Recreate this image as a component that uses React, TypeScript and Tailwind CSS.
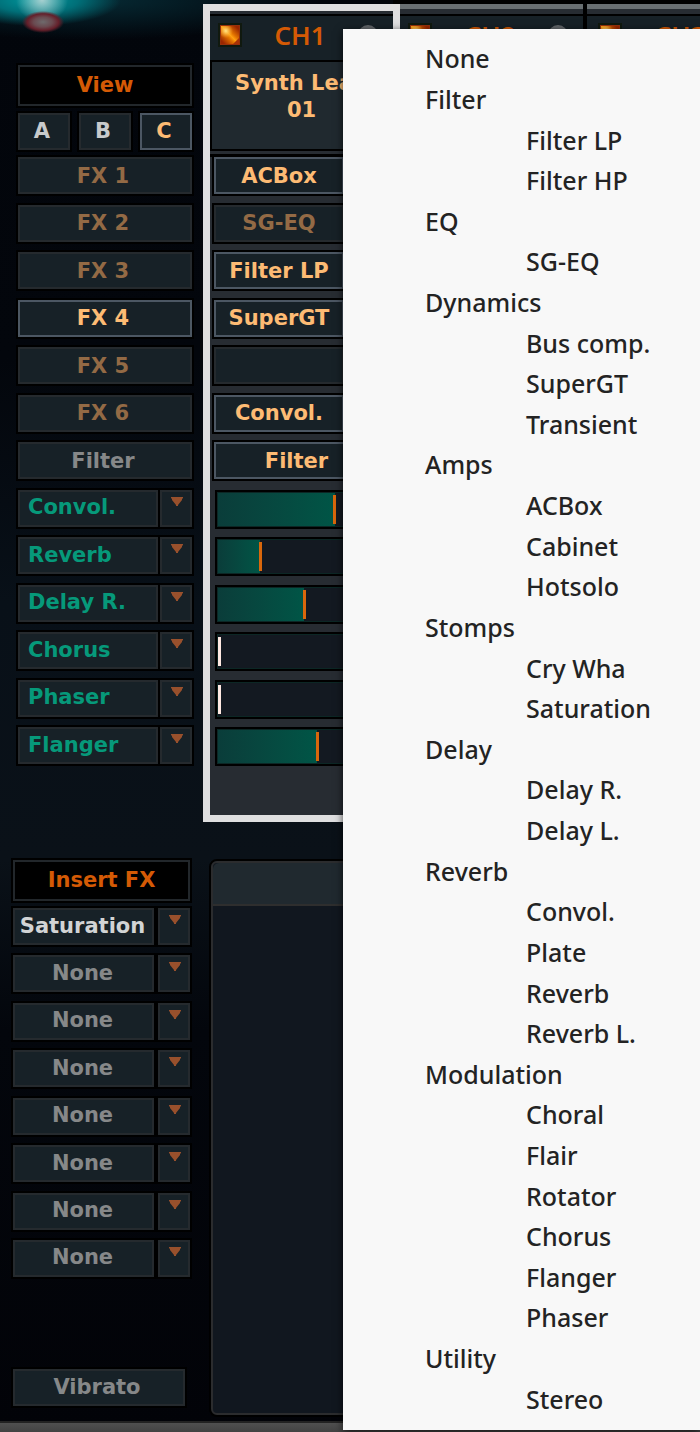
import { useState } from "react";

const box =
  "h-[37px] min-w-0 border-2 bg-[#172127] shadow-[0_0_0_2px_#000] whitespace-nowrap text-[21px] leading-6 font-bold";

const insertOptions = ["None", "Saturation"];

const sends = [
  { name: "Convol.", level: 118 },
  { name: "Reverb", level: 42 },
  { name: "Delay R.", level: 87 },
  { name: "Chorus", level: 0 },
  { name: "Phaser", level: 0 },
  { name: "Flanger", level: 100 },
];

const channelFx = [
  { name: "ACBox", on: true },
  { name: "SG-EQ", on: false },
  { name: "Filter LP", on: true },
  { name: "SuperGT", on: true },
  { name: "", on: false },
  { name: "Convol.", on: true },
];

const menu = [
  { group: "None", items: [] },
  { group: "Filter", items: ["Filter LP", "Filter HP"] },
  { group: "EQ", items: ["SG-EQ"] },
  { group: "Dynamics", items: ["Bus comp.", "SuperGT", "Transient"] },
  { group: "Amps", items: ["ACBox", "Cabinet", "Hotsolo"] },
  { group: "Stomps", items: ["Cry Wha", "Saturation"] },
  { group: "Delay", items: ["Delay R.", "Delay L."] },
  { group: "Reverb", items: ["Convol.", "Plate", "Reverb", "Reverb L."] },
  {
    group: "Modulation",
    items: ["Choral", "Flair", "Rotator", "Chorus", "Flanger", "Phaser"],
  },
  { group: "Utility", items: ["Stereo"] },
];

const ArrowButton = ({ label }: { label: string }) => (
  <button
    aria-label={label}
    className="flex h-[37px] w-8 shrink-0 justify-center border-2 border-[#252a2e] bg-[#172127] pt-[5px] pl-[2px] shadow-[0_0_0_2px_#000]"
  >
    <svg width="12" height="9" viewBox="0 0 12 9">
      <path d="M0 0H12V1L11 2V3L7 8V9H5V8L1 3V2L0 1Z" fill="#98502c" />
    </svg>
  </button>
);

const Led = () => (
  <svg width="24" height="24" viewBox="0 0 24 24" className="shrink-0">
    <defs>
      <linearGradient id="led" x1="0" y1="1" x2="1" y2="0">
        <stop offset="0.1" stopColor="#9a2600" />
        <stop offset="0.38" stopColor="#e07000" />
        <stop offset="0.5" stopColor="#ffa010" />
        <stop offset="0.62" stopColor="#e07000" />
        <stop offset="0.9" stopColor="#9a2600" />
      </linearGradient>
      <radialGradient id="glint" cx="0.27" cy="0.27" r="0.4">
        <stop offset="0" stopColor="#ffe488" />
        <stop offset="1" stopColor="#ffb030" stopOpacity="0" />
      </radialGradient>
    </defs>
    <rect width="24" height="24" fill="#10190f" />
    <rect x="2" y="2" width="20" height="20" fill="#98300a" />
    <rect x="3" y="3" width="18" height="18" fill="url(#led)" />
    <rect x="3" y="3" width="18" height="18" fill="url(#glint)" />
    <path d="M15 21L21 15V21Z" fill="#a83206" />
  </svg>
);

const ChannelHeader = ({ name }: { name: string }) => (
  <div className="mt-[5px] flex h-[46px] justify-end border-t-2 border-black bg-[#172127] pr-[15px]">
    <div className="flex w-40 items-center justify-between pb-[6px]">
      <Led />
      <span className="font-['Noto_Sans',sans-serif] text-[26px] leading-8 font-semibold text-[#d45a05]">
        {name}
      </span>
      <span className="size-5 rounded-full bg-[#62666a]" />
    </div>
  </div>
);

const SendSlider = ({ name, level }: { name: string; level: number }) => {
  const [value, setValue] = useState(level);

  return (
    <div className="flex h-[37px] items-end pl-[3px]">
      <div className="relative h-[35px] w-full border border-[#0c2725] bg-[#131921] shadow-[0_0_0_2px_#000]">
        <div
          className="h-full bg-gradient-to-r from-[#0a3d3a] to-[#005546]"
          style={{ width: `${(value / 165) * 100}%` }}
        />
        <input
          type="range"
          aria-label={name}
          min={0}
          max={165}
          value={value}
          onChange={(e) => setValue(Number(e.target.value))}
          className={`absolute inset-0 h-full w-full appearance-none bg-transparent [&::-webkit-slider-thumb]:h-[29px] [&::-webkit-slider-thumb]:w-[3px] [&::-webkit-slider-thumb]:appearance-none ${
            value === 0
              ? "[&::-webkit-slider-thumb]:bg-[#ffe9e2]"
              : "[&::-webkit-slider-thumb]:bg-[#d9670c]"
          }`}
        />
      </div>
    </div>
  );
};

const App = () => {
  const [view, setView] = useState("C");
  const [slot, setSlot] = useState("FX 4");

  return (
    <div className="relative min-w-[700px] overflow-hidden bg-[#03060c] bg-[radial-gradient(ellipse_21px_11px_at_43px_22px,#6e6a6c_0%,#6a4a50_45%,#641f2a_75%,transparent_100%),radial-gradient(ellipse_26px_22px_at_42px_0px,#a8d0d0_0%,transparent_100%),radial-gradient(ellipse_85px_26px_at_36px_0px,#009aa0_0%,#006f78_50%,transparent_100%),radial-gradient(ellipse_230px_40px_at_90px_0px,#062a34_0%,transparent_100%),linear-gradient(180deg,#02050b_0%,#03060c_25%,#081018_42%,#0a1118_60%,#03060c_72%,#020308_100%)] font-['DejaVu_Sans',sans-serif]">
      <section className="flex">
        <div className="flex w-[203px] shrink-0 flex-col gap-[7px] pt-[65px] pr-[11px] pl-[18px]">
          <h2 className="border-2 border-[#22272b] bg-black py-[6px] text-center text-[21px] leading-[25px] font-bold text-[#d45a05] shadow-[0_0_0_2px_#000]">
            View
          </h2>
          <div className="grid grid-cols-3 gap-[9px]">
            {["A", "B", "C"].map((v) => (
              <button
                key={v}
                onClick={() => setView(v)}
                className={`${box} pr-1 pb-[2px] ${
                  v === view
                    ? "border-[#4c5763] text-[#fdbb74]"
                    : "border-[#252a2e] text-[#c8cacb]"
                }`}
              >
                {v}
              </button>
            ))}
          </div>
          <div className="flex h-[607px] flex-col justify-between">
            {["FX 1", "FX 2", "FX 3", "FX 4", "FX 5", "FX 6"].map((fx) => (
              <button
                key={fx}
                onClick={() => setSlot(fx)}
                className={`${box} pr-1 ${
                  fx === slot
                    ? "border-[#4c5763] text-[#fdbb74]"
                    : "border-[#252a2e] text-[#936a45]"
                }`}
              >
                {fx}
              </button>
            ))}
            <button className={`${box} pr-1 border-[#252a2e] text-[#868889]`}>
              Filter
            </button>
            {sends.map((send) => (
              <div key={send.name} className="flex gap-[2px]">
                <select
                  aria-label={`Send ${send.name}`}
                  defaultValue={send.name}
                  className={`${box} flex-1 appearance-none border-[#252a2e] pb-[2px] pl-2 text-[#06997a]`}
                >
                  {sends.map((s) => (
                    <option key={s.name}>{s.name}</option>
                  ))}
                </select>
                <ArrowButton label={`Choose ${send.name} send`} />
              </div>
            ))}
          </div>
        </div>

        <div className="flex min-w-0 flex-1 overflow-hidden pt-[4px]">
          {/* selected channel */}
          <div className="relative z-10 -mr-[3px] h-[818px] w-[197px] shrink-0 border-[7px] border-[#dfdfe0] bg-[#272c32]">
            <div className="-mt-[2px]">
              <ChannelHeader name="CH1" />
            </div>
            <div className="h-[91px] border-2 border-black bg-[#20292f] pt-2 text-center text-[21px] leading-[27px] font-bold text-[#fdbb74]">
              Synth Lead
              <br />
              01
            </div>
            <div className="mt-[3px] border-t-[3px] border-black pr-[10px] pl-1">
              <div className="flex h-[607px] flex-col justify-between">
                {channelFx.map((fx, i) => (
                  <div key={i} className="flex gap-1">
                    <button
                      aria-label={`FX ${i + 1} ${fx.name}`}
                      className={`${box} w-[130px] ${
                        fx.on
                          ? "border-[#4c5763] text-[#fdbb74]"
                          : "border-[#252a2e] text-[#936a45]"
                      }`}
                    >
                      {fx.name}
                    </button>
                    <ArrowButton label={`Choose FX ${i + 1}`} />
                  </div>
                ))}
                <button
                  className={`${box} pr-1 border-[#4c5763] text-[#fdbb74]`}
                >
                  Filter
                </button>
                {sends.map((send) => (
                  <SendSlider key={send.name} {...send} />
                ))}
              </div>
            </div>
          </div>

          {["CH2", "CH3"].map((name) => (
            <div
              key={name}
              className="mr-1 h-[818px] w-[186px] shrink-0 border-t-[5px] border-[#696f72] bg-[#272c32] outline-4 outline-black"
            >
              <ChannelHeader name={name} />
            </div>
          ))}
        </div>
      </section>

      <section className="flex pt-[37px]">
        <div className="w-[209px] shrink-0 pt-[1px] pb-[15px] pl-[13px]">
          <div className="flex w-[177px] flex-col gap-[7px]">
            <h2 className="border-2 border-[#22272b] bg-black py-[6px] text-center text-[21px] leading-[25px] font-bold text-[#d45a05] shadow-[0_0_0_2px_#000]">
              Insert FX
            </h2>
            <div className="flex h-[369px] flex-col justify-between">
              {Array.from({ length: 8 }, (_, i) => (
                <div key={i} className="flex gap-1">
                  <select
                    aria-label={`Insert ${i + 1}`}
                    defaultValue={i === 0 ? "Saturation" : "None"}
                    className={`${box} flex-1 appearance-none border-[#252a2e] pr-[2px] pb-[2px] text-center ${
                      i === 0 ? "text-[#d2d4d5]" : "text-[#868889]"
                    }`}
                  >
                    {insertOptions.map((o) => (
                      <option key={o}>{o}</option>
                    ))}
                  </select>
                  <ArrowButton label={`Choose insert ${i + 1}`} />
                </div>
              ))}
            </div>
          </div>
          <button
            className={`${box} mt-[92px] w-[172px] border-[#252a2e] pr-1 pb-[2px] text-[#868889]`}
          >
            Vibrato
          </button>
        </div>
        <div className="mb-1 flex-1 rounded-lg border-2 border-black">
          <div className="h-full rounded-md border-2 border-[#2b2c2e] bg-[#11171f]">
            <div className="h-[43px] rounded-t-md border-b-2 border-[#2e2e2e] bg-[#20292f]" />
          </div>
        </div>
      </section>

      <footer className="h-[11px] border-t-2 border-[#222222] bg-gradient-to-b from-[#505050] to-[#424242]" />

      {/* effect picker, open above the mixer */}
      <div
        role="menu"
        className="absolute top-[29px] right-0 bottom-[2px] left-[343px] z-20 grid auto-rows-fr bg-[#f8f8f8] pt-[9px] pb-[11px] font-['Noto_Sans',sans-serif] text-[25px] leading-8 font-medium text-[#232323] shadow-[0_2px_8px_rgba(0,0,0,0.7)]"
      >
        {menu.flatMap(({ group, items }) => [
          <button
            key={group}
            role="menuitem"
            className="flex items-center pl-[82px] text-left"
          >
            {group}
          </button>,
          ...items.map((item) => (
            <button
              key={`${group}-${item}`}
              role="menuitem"
              className="flex items-center pl-[183px] text-left"
            >
              {item}
            </button>
          )),
        ])}
      </div>
    </div>
  );
};

export default App;
